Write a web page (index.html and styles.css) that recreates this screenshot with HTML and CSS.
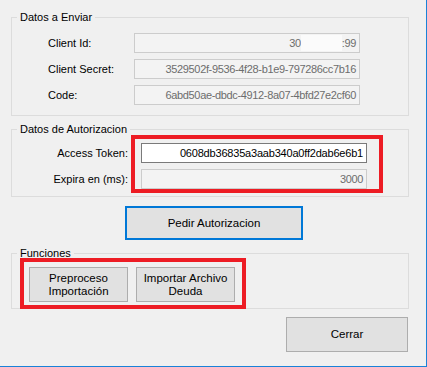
FILE: index.html
```html
<!DOCTYPE html>
<html lang="es">
<head>
  <meta charset="UTF-8" />
  <title>Autorizacion</title>
  <link rel="stylesheet" href="styles.css">
</head>
<body>
  <div class="window">

    <fieldset class="group enviar">
      <legend>Datos a Enviar</legend>
      <div class="row">
        <label>Client Id:</label>
        <div class="box disabled"><span>30</span><span class="gap"></span><span>:99</span></div>
      </div>
      <div class="row">
        <label>Client Secret:</label>
        <div class="box disabled">3529502f-9536-4f28-b1e9-797286cc7b16</div>
      </div>
      <div class="row">
        <label>Code:</label>
        <div class="box disabled">6abd50ae-dbdc-4912-8a07-4bfd27e2cf60</div>
      </div>
    </fieldset>

    <fieldset class="group auth">
      <legend>Datos de Autorizacion</legend>
      <div class="row">
        <label>Access Token:</label>
        <div class="box active">0608db36835a3aab340a0ff2dab6e6b1</div>
      </div>
      <div class="row">
        <label>Expira en (ms):</label>
        <div class="box disabled">3000</div>
      </div>
      <div class="mark mark-auth"></div>
    </fieldset>

    <button class="btn btn-pedir">Pedir Autorizacion</button>

    <fieldset class="group funciones">
      <legend>Funciones</legend>
      <div class="actions">
        <button class="btn btn-func">Preproceso<br>Importación</button>
        <button class="btn btn-func">Importar Archivo<br>Deuda</button>
      </div>
      <div class="mark mark-func"></div>
    </fieldset>

    <div class="footer">
      <button class="btn btn-cerrar">Cerrar</button>
    </div>

  </div>
</body>
</html>
```

FILE: styles.css
```css
html, body {
  margin: 0;
  padding: 0;
}

body {
  font-family: "Liberation Sans", Arial, sans-serif;
  font-size: 11px;
  color: #000;
  background: #f0f0f0;
}

.window {
  width: 427px;
  height: 367px;
  box-sizing: border-box;
  border-right: 1px solid #1a82d8;
  border-bottom: 1px solid #1a82d8;
  overflow: hidden;
}

.group {
  position: relative;
  width: 398px;
  box-sizing: border-box;
  margin: 0 0 0 11px;
  border: 1px solid #dcdcdc;
  padding: 0 0 0 5px;
  min-width: 0;
}

.group legend {
  padding: 0 3px 0 3px;
  line-height: 13px;
  height: 13px;
}

.enviar {
  margin-top: 11px;
  padding-top: 9px;
  padding-bottom: 10px;
}

.auth {
  margin-top: 7px;
  padding-top: 7px;
  padding-bottom: 7px;
}

.funciones {
  margin-top: 7px;
  padding-top: 7px;
  padding-bottom: 6px;
}

.row {
  display: flex;
  align-items: center;
  height: 20px;
}

.row + .row {
  margin-top: 6px;
}

.enviar .row label {
  width: 86px;
  padding-left: 31px;
}

.auth .row label {
  width: 111px;
  text-align: right;
  margin-right: 13px;
}

.box {
  width: 226px;
  height: 20px;
  box-sizing: border-box;
  padding: 0 3px;
  display: flex;
  align-items: center;
  justify-content: flex-end;
  white-space: nowrap;
  overflow: hidden;
  font-size: 11px;
}

.box.disabled {
  background: #f3f3f3;
  border: 1px solid #cccccc;
  color: #6d6d6d;
  letter-spacing: -0.35px;
}

.box.active {
  background: #fff;
  border: 1px solid #7a7a7a;
  color: #000;
  letter-spacing: -0.2px;
}

.box .gap {
  display: inline-block;
  width: 41px;
  align-self: stretch;
  background: #fbfbfb;
  margin: 1px 0;
}

.btn {
  font-family: "Liberation Sans", Arial, sans-serif;
  font-size: 11.5px;
  color: #000;
  background: #e1e1e1;
  border: 1px solid #adadad;
  padding: 0;
  line-height: 13px;
}

.btn-pedir {
  display: block;
  margin: 9px 0 0 125px;
  width: 178px;
  height: 34px;
  border: 2px solid #0078d7;
}

.actions {
  display: flex;
  gap: 8px;
  padding-left: 12px;
}

.btn-func {
  width: 99px;
  height: 35px;
}

.footer {
  display: flex;
  justify-content: flex-end;
  padding-right: 18px;
  margin-top: 8px;
}

.btn-cerrar {
  width: 122px;
  height: 35px;
}

.mark {
  position: absolute;
  border: 4px solid #ed1c24;
  box-sizing: border-box;
}

.mark-auth {
  left: 119px;
  top: -1px;
  width: 252px;
  height: 58px;
}

.mark-func {
  left: 8px;
  top: -2px;
  width: 226px;
  height: 51px;
}
```
